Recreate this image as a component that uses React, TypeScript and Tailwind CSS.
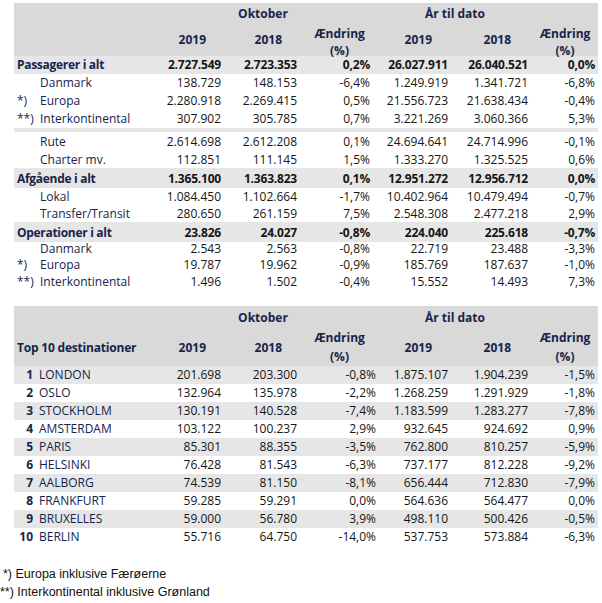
import React from "react";

type R = {
  kind: "total" | "row" | "sep";
  label?: string;
  mark?: string;
  v?: string[];
  h?: string;
};

const topRows: R[] = [
  { kind: "total", label: "Passagerer i alt", v: ["2.727.549", "2.723.353", "0,2%", "26.027.911", "26.040.521", "0,0%"], h: "h-[18px]" },
  { kind: "row", label: "Danmark", v: ["138.729", "148.153", "-6,4%", "1.249.919", "1.341.721", "-6,8%"], h: "h-[18px]" },
  { kind: "row", mark: "*)", label: "Europa", v: ["2.280.918", "2.269.415", "0,5%", "21.556.723", "21.638.434", "-0,4%"], h: "h-[18px]" },
  { kind: "row", mark: "**)", label: "Interkontinental", v: ["307.902", "305.785", "0,7%", "3.221.269", "3.060.366", "5,3%"], h: "h-[18px]" },
  { kind: "sep" },
  { kind: "row", label: "Rute", v: ["2.614.698", "2.612.208", "0,1%", "24.694.641", "24.714.996", "-0,1%"], h: "h-[19px]" },
  { kind: "row", label: "Charter mv.", v: ["112.851", "111.145", "1,5%", "1.333.270", "1.325.525", "0,6%"], h: "h-[17px]" },
  { kind: "total", label: "Afgående i alt", v: ["1.365.100", "1.363.823", "0,1%", "12.951.272", "12.956.712", "0,0%"], h: "h-[20px] pt-[2px]" },
  { kind: "row", label: "Lokal", v: ["1.084.450", "1.102.664", "-1,7%", "10.402.964", "10.479.494", "-0,7%"], h: "h-[17px]" },
  { kind: "row", label: "Transfer/Transit", v: ["280.650", "261.159", "7,5%", "2.548.308", "2.477.218", "2,9%"], h: "h-[17px]" },
  { kind: "total", label: "Operationer i alt", v: ["23.826", "24.027", "-0,8%", "224.040", "225.618", "-0,7%"], h: "h-[20px] pt-[1px]" },
  { kind: "row", label: "Danmark", v: ["2.543", "2.563", "-0,8%", "22.719", "23.488", "-3,3%"], h: "h-[14px]" },
  { kind: "row", mark: "*)", label: "Europa", v: ["19.787", "19.962", "-0,9%", "185.769", "187.637", "-1,0%"], h: "h-[17px]" },
  { kind: "row", mark: "**)", label: "Interkontinental", v: ["1.496", "1.502", "-0,4%", "15.552", "14.493", "7,3%"], h: "h-[17px]" },
];

const dest: [string, string, string[]][] = [
  ["1", "LONDON", ["201.698", "203.300", "-0,8%", "1.875.107", "1.904.239", "-1,5%"]],
  ["2", "OSLO", ["132.964", "135.978", "-2,2%", "1.268.259", "1.291.929", "-1,8%"]],
  ["3", "STOCKHOLM", ["130.191", "140.528", "-7,4%", "1.183.599", "1.283.277", "-7,8%"]],
  ["4", "AMSTERDAM", ["103.122", "100.237", "2,9%", "932.645", "924.692", "0,9%"]],
  ["5", "PARIS", ["85.301", "88.355", "-3,5%", "762.800", "810.257", "-5,9%"]],
  ["6", "HELSINKI", ["76.428", "81.543", "-6,3%", "737.177", "812.228", "-9,2%"]],
  ["7", "AALBORG", ["74.539", "81.150", "-8,1%", "656.444", "712.830", "-7,9%"]],
  ["8", "FRANKFURT", ["59.285", "59.291", "0,0%", "564.636", "564.477", "0,0%"]],
  ["9", "BRUXELLES", ["59.000", "56.780", "3,9%", "498.110", "500.426", "-0,5%"]],
  ["10", "BERLIN", ["55.716", "64.750", "-14,0%", "537.753", "573.884", "-6,3%"]],
];

const W = ["w-[65px]", "w-[76px]", "w-[77px]", "w-[74px]", "w-[80px]", "w-[66px]"];
const padTop = ["pr-[4px]", "pr-[4px]", "pr-[8px]", "pr-[4px]", "pr-[4px]", "pr-[3px]"];
const padBot = ["pr-[4px]", "pr-[4px]", "pr-[2px]", "pr-[4px]", "pr-[4px]", "pr-[3px]"];

const NAVY = "text-[#17244a]";
const NUM = "text-[#151515]";

function Nums({ v, pads, bold }: { v: string[]; pads: string[]; bold?: boolean }) {
  return (
    <>
      {v.map((x, i) => (
        <div key={i} className={`${W[i]} shrink-0 text-right whitespace-nowrap ${pads[i]} ${NUM} ${bold ? "font-bold tracking-[-0.2px]" : ""}`}>
          {x}
        </div>
      ))}
    </>
  );
}

function Header({ top, lead, firstH, restH, label }: { top: string; lead: string; firstH: string; restH: string; label?: string }) {
  return (
    <div className={`bg-[#d9d9d9] w-[584px] font-bold ${NAVY}`}>
      <div className={`flex items-center ${firstH}`}>
        <div className="w-[146px] shrink-0" />
        <div className="w-[218px] shrink-0 text-center pr-[12px]">Oktober</div>
        <div className="w-[154px] shrink-0 text-center">År til dato</div>
      </div>
      <div className={`flex items-stretch ${restH}`}>
        <div className="w-[146px] shrink-0 flex items-center pl-[3px] tracking-[-0.2px]">{label}</div>
        <div className="w-[65px] shrink-0 flex items-center justify-end pr-[19px]">2019</div>
        <div className="w-[76px] shrink-0 flex items-center justify-end pr-[19px]">2018</div>
        <div className={`w-[77px] shrink-0 flex flex-col items-center ${top} ${lead}`}>
          <span>Ændring</span>
          <span>(%)</span>
        </div>
        <div className="w-[74px] shrink-0 flex items-center justify-end pr-[20px]">2019</div>
        <div className="w-[80px] shrink-0 flex items-center justify-end pr-[21px]">2018</div>
        <div className={`w-[66px] shrink-0 flex flex-col items-center ${top} ${lead}`}>
          <span>Ændring</span>
          <span>(%)</span>
        </div>
      </div>
    </div>
  );
}

export default function App() {
  return (
    <div className="w-[602px] h-[603px] bg-white font-['Open_Sans',sans-serif] text-[12px] leading-[17px] overflow-hidden">
      <div className="pl-[14px] pt-[3px]">
        <Header top="pt-[2px]" lead="leading-[17px]" firstH="h-[20px]" restH="h-[33px]" />
        {topRows.map((r, i) => {
          if (r.kind === "sep") return <div key={i} className="h-[4px] w-[584px] bg-[#e6e6e6]" />;
          const total = r.kind === "total";
          return (
            <div key={i} className={`flex items-center w-[584px] ${r.h} leading-[12px] ${total ? "bg-[#e6e6e6]" : ""}`}>
              {total ? (
                <div className={`w-[146px] shrink-0 pl-[3px] font-bold tracking-[-0.3px] ${NAVY}`}>{r.label}</div>
              ) : (
                <div className={`w-[146px] shrink-0 flex pl-[3px] ${NAVY}`}>
                  <span className="w-[23px] shrink-0">{r.mark}</span>
                  <span>{r.label}</span>
                </div>
              )}
              <Nums v={r.v!} pads={padTop} bold={total} />
            </div>
          );
        })}

        <div className="h-[16px]" />
        <Header top="pt-0" lead="leading-[19px]" firstH="h-[22px]" restH="h-[38px]" label="Top 10 destinationer" />
        {dest.map(([n, city, v], i) => (
          <div key={n} className={`flex items-center w-[584px] h-[18px] leading-[12px] ${i % 2 === 0 ? "bg-[#e6e6e6]" : ""}`}>
            <div className="w-[146px] shrink-0 flex">
              <span className={`w-[19px] shrink-0 text-right font-bold ${NAVY}`}>{n}</span>
              <span className={`ml-[6px] ${NAVY}`}>{city}</span>
            </div>
            <Nums v={v} pads={padBot} />
          </div>
        ))}
      </div>
      <div className="mt-[19px] font-['Liberation_Sans',Arial,sans-serif] text-[12.5px] leading-[18px] text-[#111]">
        <div className="pl-[3px]">*) Europa inklusive Færøerne</div>
        <div>**) Interkontinental inklusive Grønland</div>
      </div>
    </div>
  );
}
